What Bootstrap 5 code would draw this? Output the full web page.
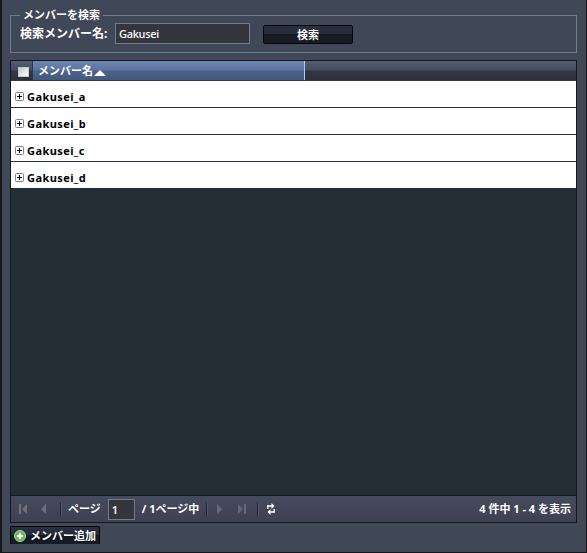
<!DOCTYPE html>
<html lang="ja">
<head>
<meta charset="utf-8">
<title>メンバーを検索</title>
<link href="https://cdn.jsdelivr.net/npm/bootstrap@5.3.0/dist/css/bootstrap.min.css" rel="stylesheet">
<style>
body{font:bold 11px/14px "Noto Sans","Noto Sans CJK JP",sans-serif;color:#fff;background:#404757;height:553px;overflow:hidden}
.frame{height:553px;border:solid #16171b;border-width:0 1px 1px 2px;padding:8px 9px 0 8px}
.search-set{height:45px;border:1px solid #737b8c;padding:0 0 0 9px}
.search-set legend{float:none;width:83px;height:14px;margin:0;padding:0 0 0 3px;font-size:11px;line-height:14px;font-weight:bold;white-space:nowrap}
.search-row{height:21px;margin-top:1px}
.search-label{width:95px;font-size:12px;white-space:nowrap}
.dark-field{background:#33373d;border:1px solid #737b8c;border-radius:0;color:#fff;font:500 11px/17px "Noto Sans",sans-serif;padding:0 3px;min-height:0;letter-spacing:-.3px}
.dark-field.name{width:135px;height:21px}
.dark-field.page-no{width:27px;height:21px;margin-left:7px;font-weight:600}
.dark-btn{background:linear-gradient(#2a3040 0,#252b38 47%,#141821 50%,#171c24);border:1px solid #05070b;border-radius:2px;color:#fff;font-weight:bold;font-size:11px;line-height:15px;padding:0}
.dark-btn.find{width:90px;height:19px;margin:1px 0 0 13px}
.dark-btn.add{width:90px;height:18px;margin-top:3px;padding-left:3px;border-width:1px 1px 0 1px;border-radius:2px 2px 0 0}
.member-grid{height:463px;margin-top:7px;border:1px solid #17181d;background:#232d36}
.grid-head{height:20px;background:linear-gradient(#555c72 0,#454b5e 49%,#343844 51%,#2c303a);border-bottom:1px solid #353947}
.head-check{width:22px;padding-left:7px;padding-top:2px;border-right:1px solid #30364a}
.head-name{width:272px;padding-left:5px;border-right:1px solid #a9cdfa;background:linear-gradient(#6d86b2 0,#5b749f 49%,#4d6389 51%,#435a80)}
.check-box{width:11px;height:10px;background:linear-gradient(135deg,#c4c6c8,#fff);border:1px solid #c5c6c8}
.member-row{height:27px;background:#fff;color:#000;border-bottom:1px solid #27303b;padding:5px 0 0 4px;letter-spacing:.42px}
.member-row span{margin-left:3px}
.member-row:last-child{border-color:#232d36}
.pager{height:27px;border-top:1px solid #15171c;background:linear-gradient(#464a5d,#3d4152);padding:0 5px 0 7px}
.rule{flex:none;width:2px;height:13px;background:#1f2230;border-right:1px solid #555b6c}
.page-word{margin-left:6px}
.page-total{margin-left:7px;width:64px;white-space:nowrap}
svg{display:block;flex:none}
</style>
<script src="https://cdn.jsdelivr.net/npm/bootstrap@5.3.0/dist/js/bootstrap.bundle.min.js"></script>
</head>
<body>
<main class="frame">
<fieldset class="search-set"><legend>メンバーを検索</legend>
<div class="search-row d-flex align-items-center"><label class="search-label" for="q">検索メンバー名:</label><input id="q" class="form-control dark-field name" value="Gakusei"><button class="btn dark-btn find">検索</button></div>
</fieldset>
<section class="member-grid d-flex flex-column">
<div class="grid-head d-flex"><div class="head-check d-flex align-items-center"><span class="check-box"></span></div><div class="head-name d-flex align-items-center"><span>メンバー名</span><svg width="13" height="7" class="mt-1"><path d="M1 7L7 1L13 7Z" fill="#fff"/></svg></div></div>
<div class="flex-grow-1">
<div class="member-row d-flex align-items-center"><svg width="9" height="9" viewBox="0 0 9 9"><rect x=".5" y=".5" width="8" height="8" rx="1" fill="#fff" stroke="#72869b"/><path d="M2 4.500H7M4.500 2V7" stroke="#000"/></svg><span>Gakusei_a</span></div>
<div class="member-row d-flex align-items-center"><svg width="9" height="9" viewBox="0 0 9 9"><rect x=".5" y=".5" width="8" height="8" rx="1" fill="#fff" stroke="#72869b"/><path d="M2 4.500H7M4.500 2V7" stroke="#000"/></svg><span>Gakusei_b</span></div>
<div class="member-row d-flex align-items-center"><svg width="9" height="9" viewBox="0 0 9 9"><rect x=".5" y=".5" width="8" height="8" rx="1" fill="#fff" stroke="#72869b"/><path d="M2 4.500H7M4.500 2V7" stroke="#000"/></svg><span>Gakusei_c</span></div>
<div class="member-row d-flex align-items-center"><svg width="9" height="9" viewBox="0 0 9 9"><rect x=".5" y=".5" width="8" height="8" rx="1" fill="#fff" stroke="#72869b"/><path d="M2 4.500H7M4.500 2V7" stroke="#000"/></svg><span>Gakusei_d</span></div>
</div>
<div class="pager d-flex align-items-center">
<svg width="42" height="12" fill="#6d707b"><path d="M1 1h2v10H1zM9 1v10L4 6zM28 1v10L23 6z"/></svg><span class="rule"></span>
<span class="page-word">ページ</span><input class="form-control dark-field page-no" value="1" aria-label="ページ"><span class="page-total">/ 1ページ中</span><span class="rule"></span>
<svg width="49" height="12" fill="#666974"><path d="M9 1v10L14.500 6zM30 1v10L35 6zM36 1h2v10h-2z"/></svg><span class="rule"></span>
<svg style="margin-left:7px" width="10" height="12" fill="none" stroke="#fff" stroke-width="1.500"><path d="M1.750 6V3H6M8.250 6V9H4"/><path d="M5.500 0L8.500 3L5.500 6ZM4.500 6L1.500 9L4.500 12Z" fill="#fff" stroke="none"/></svg>
<span class="ms-auto page-status">4 件中 1 - 4 を表示</span>
</div>
</section>
<button class="btn dark-btn add d-flex align-items-center"><svg width="12" height="12"><circle cx="6" cy="6" r="5.500" fill="#6eb85b" stroke="#a4d796"/><path d="M6 3V9M3 6H9" stroke="#fff" stroke-width="2"/></svg><span class="ms-1">メンバー追加</span></button>
</main>
</body>
</html>
